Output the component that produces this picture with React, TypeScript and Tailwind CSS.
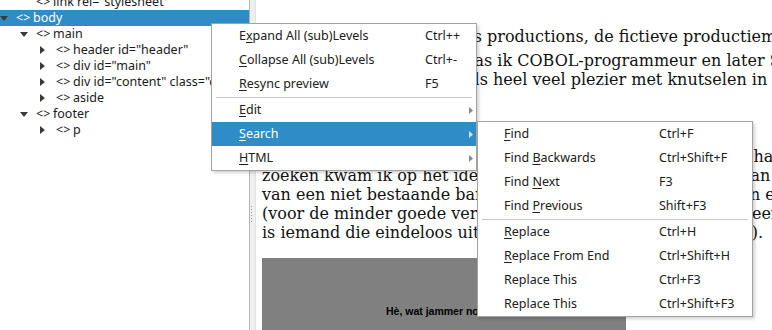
import React from "react";

type Row = { level: number; arrow: "down" | "right" | null; label: string; selected?: boolean };

const rows: Row[] = [
  { level: 1, arrow: null, label: 'link rel="stylesheet"' },
  { level: 0, arrow: "down", label: "body", selected: true },
  { level: 1, arrow: "down", label: "main" },
  { level: 2, arrow: "right", label: 'header id="header"' },
  { level: 2, arrow: "right", label: 'div id="main"' },
  { level: 2, arrow: "right", label: 'div id="content" class="content"' },
  { level: 2, arrow: "right", label: "aside" },
  { level: 1, arrow: "down", label: "footer" },
  { level: 2, arrow: "right", label: "p" },
];

function Arrow({ dir, light }: { dir: "down" | "right"; light?: boolean }) {
  if (dir === "down")
    return (
      <svg width="8" height="5" viewBox="0 0 8 5" className="block">
        <path d="M0 0 L8 0 L4 5 Z" fill={light ? "#ffffff" : "#3a3a3a"} />
      </svg>
    );
  return (
    <svg width="5" height="8" viewBox="0 0 5 8" className="block">
      <path d="M0 0 L5 4 L0 8 Z" fill={light ? "#ffffff" : "#3a3a3a"} />
    </svg>
  );
}

function MenuArrow({ light }: { light?: boolean }) {
  return (
    <svg width="4" height="7" viewBox="0 0 4 7" className="block">
      <path d="M0 0 L4 3.5 L0 7 Z" fill={light ? "#cfe3f3" : "#8a8a8a"} />
    </svg>
  );
}

type Item =
  | { sep: true }
  | { sep?: false; pre: string; u?: string; post?: string; shortcut?: string; sub?: boolean; active?: boolean };

const mainItems: Item[] = [
  { pre: "E", u: "x", post: "pand All (sub)Levels", shortcut: "Ctrl++" },
  { pre: "", u: "C", post: "ollapse All (sub)Levels", shortcut: "Ctrl+-" },
  { pre: "", u: "R", post: "esync preview", shortcut: "F5" },
  { sep: true },
  { pre: "", u: "E", post: "dit", sub: true },
  { pre: "", u: "S", post: "earch", sub: true, active: true },
  { pre: "", u: "H", post: "TML", sub: true },
];

const subItems: Item[] = [
  { pre: "", u: "F", post: "ind", shortcut: "Ctrl+F" },
  { pre: "Find ", u: "B", post: "ackwards", shortcut: "Ctrl+Shift+F" },
  { pre: "Find ", u: "N", post: "ext", shortcut: "F3" },
  { pre: "Find ", u: "P", post: "revious", shortcut: "Shift+F3" },
  { sep: true },
  { pre: "", u: "R", post: "eplace", shortcut: "Ctrl+H" },
  { pre: "", u: "R", post: "eplace From End", shortcut: "Ctrl+Shift+H" },
  { pre: "Replace This", shortcut: "Ctrl+F3" },
  { pre: "Replace This", shortcut: "Ctrl+Shift+F3" },
];

function Menu({ items, labelW, padL, className }: { items: Item[]; labelW: string; padL: string; className: string }) {
  return (
    <div
      className={
        "absolute bg-white border border-[#a3a3a3] shadow-[2px_2px_3px_rgba(0,0,0,0.18)] text-[12.5px] text-[#202020] " +
        className
      }
    >
      {items.map((it, i) =>
        it.sep ? (
          <div key={i} className="h-[2px] pt-px px-[4px]">
            <div className="h-px bg-[#c9c9c9]" />
          </div>
        ) : (
          <div
            key={i}
            className={
              "h-[24px] flex items-center pr-[3px] " +
              padL +
              (it.active ? " bg-[#308cc6] text-white" : "")
            }
          >
            <div className={"shrink-0 whitespace-nowrap " + labelW}>
              {it.pre}
              {it.u ? <u className="underline underline-offset-[2px]">{it.u}</u> : null}
              {it.post}
            </div>
            <div className="flex-1 whitespace-nowrap">{it.shortcut}</div>
            {it.sub ? <MenuArrow light={it.active} /> : null}
          </div>
        )
      )}
    </div>
  );
}

export default function App() {
  return (
    <div className="relative w-[772px] h-[330px] overflow-hidden bg-white flex font-['Noto_Sans',sans-serif]">
      {/* Tree */}
      <div className="w-[250px] shrink-0 border-r border-[#b4b4b4] overflow-hidden">
        <div className="-mt-[6px] text-[12.5px]">
          {rows.map((r, i) => (
            <div
              key={i}
              className={
                "h-[16px] flex items-center whitespace-nowrap " +
                (r.selected ? "bg-[#308cc6] text-white" : "text-[#1a1a1a]")
              }
            >
              <div className="shrink-0" style={{ width: r.level * 20 }} />
              <div className="w-[16px] shrink-0 flex items-center">
                {r.arrow ? <Arrow dir={r.arrow} /> : null}
              </div>
              <span className="w-[17px] shrink-0">&lt;&gt;</span>
              <span>{r.label}</span>
            </div>
          ))}
        </div>
      </div>

      {/* Splitter */}
      <div className="w-[6px] shrink-0 bg-[#efefef] border-r border-[#e2e2e2] flex flex-col items-start pl-[1px] pt-[206px] gap-[2px]">
        {[0, 1, 2, 3, 4, 5].map((d) => (
          <div key={d} className="w-px h-px bg-[#9a9a9a]" />
        ))}
      </div>

      {/* Preview */}
      <div className="flex-1 overflow-hidden pl-[6px] pt-[27px] font-['DejaVu_Serif',serif] text-[16px] leading-[19px] text-[#111]">
        <div className="whitespace-nowrap">Kijk op de site van Ronnies productions, de fictieve productiemaatschappij</div>
        <div className="mt-[5px] whitespace-nowrap">Tijdens mijn werkleven, was ik COBOL-programmeur en later Systeembeheerder</div>
        <div className="whitespace-nowrap">Intussen beleefde ik ook als heel veel plezier met knutselen in HTML</div>
        <div className="mt-[58px] whitespace-nowrap">Als ik een naam voor mijn website nodig had na erg lang en hard</div>
        <div className="whitespace-nowrap">zoeken kwam ik op het idee om hiervoor de naam te lenen van</div>
        <div className="whitespace-nowrap">van een niet bestaande band uit een film: Oldscool Ronnie en een</div>
        <div className="whitespace-nowrap">(voor de minder goede verstaanders een Oldscool Ronnie is een</div>
        <div className="whitespace-nowrap">is iemand die eindeloos uitweidt over haast alles en nog wat).</div>
        <div className="mt-[16px] w-[364px] h-[90px] bg-[#808080] pl-[124px] pt-[46px] font-['Liberation_Sans',Arial,sans-serif] text-[10.5px] font-bold text-black leading-[14px] whitespace-nowrap">
          Hè, wat jammer nou!
        </div>
      </div>

      <Menu items={mainItems} labelW="w-[186px]" padL="pl-[27px]" className="left-[211px] top-[23px] w-[266px]" />
      <Menu items={subItems} labelW="w-[155px]" padL="pl-[26px]" className="left-[477px] top-[121px] w-[276px]" />
    </div>
  );
}
